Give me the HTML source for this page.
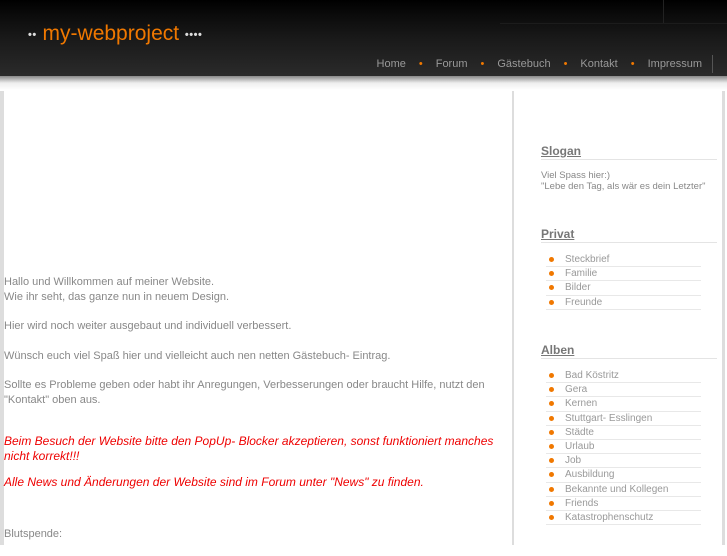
<!DOCTYPE html>
<html><head><meta charset="utf-8"><style>
*{margin:0;padding:0;box-sizing:border-box}
body{width:727px;height:545px;overflow:hidden;background:#fff;font-family:"Liberation Sans",Arial,sans-serif;position:relative}
#hd{position:absolute;left:0;top:0;width:727px;height:76px;background:linear-gradient(#000 0,#0b0b0b 15px,#1a1a1a 40px,#2a2a2a 75px)}
#hd .vl{position:absolute;left:663px;top:0;width:1px;height:24px;background:#222}
#hd .hl{position:absolute;left:500px;top:23px;width:227px;height:1px;background:#1c1c1c}
#logo{position:absolute;left:28px;top:22px;color:#f07800;font-size:21px}
#logo span{color:#ddd;font-size:11px;letter-spacing:0.5px;font-weight:bold;vertical-align:2px}
#nav{position:absolute;right:0;top:55px;font-size:11px;color:#999}
#nav b{color:#f07800;font-weight:normal;margin:0 13px;font-size:11px}
#nav .end{display:inline-block;width:1px;height:18px;background:#555;vertical-align:middle;margin:0 14px 0 10px}
#sh{position:absolute;left:0;top:76px;width:727px;height:14px;background:linear-gradient(#888,#eee 50%,#fff)}
#lb{position:absolute;left:0;top:91px;width:4px;height:454px;background:#ddd}
#sb1{position:absolute;left:512px;top:91px;width:2px;height:454px;background:#ddd}
#sb2{position:absolute;left:722px;top:91px;width:3px;height:454px;background:#ddd}
#main{position:absolute;left:4px;top:275px;width:490px;font-size:11px;line-height:14.5px;color:#888}
#main p{margin-bottom:15px}
#main .r{color:#e00;font-style:italic;font-size:12px}
h3{position:absolute;left:541px;font-size:12px;color:#777;text-decoration:underline;width:176px;border-bottom:1px solid #e4e4e4;padding-bottom:1px;line-height:14px}
.txt{position:absolute;left:541px;font-size:9.5px;color:#888;line-height:10.5px}
ul{position:absolute;left:546px;width:155px;list-style:none;font-size:10px;color:#999}
li{height:14.2px;line-height:13px;border-bottom:1px solid #e8e8e8;padding-left:19px;position:relative}
li:before{content:"";position:absolute;left:3px;top:4px;width:5px;height:5px;border-radius:50%;background:#f07800}
</style></head><body>
<div id="hd"><div class="vl"></div><div class="hl"></div>
<div id="logo"><span>••</span> my-webproject <span>••••</span></div>
<div id="nav"><span>Home</span><b>•</b><span>Forum</span><b>•</b><span>Gästebuch</span><b>•</b><span>Kontakt</span><b>•</b><span>Impressum</span><i class="end"></i></div>
</div>
<div id="sh"></div>
<div id="lb"></div><div id="sb1"></div><div id="sb2"></div>
<div id="main">
<p>Hallo und Willkommen auf meiner Website.<br>Wie ihr seht, das ganze nun in neuem Design.</p>
<p>Hier wird noch weiter ausgebaut und individuell verbessert.</p>
<p>Wünsch euch viel Spaß hier und vielleicht auch nen netten Gästebuch- Eintrag.</p>
<p style="margin-bottom:27px">Sollte es Probleme geben oder habt ihr Anregungen, Verbesserungen oder braucht Hilfe, nutzt den "Kontakt" oben aus.</p>
<p class="r" style="margin-bottom:12px">Beim Besuch der Website bitte den PopUp- Blocker akzeptieren, sonst funktioniert manches nicht korrekt!!!</p>
<p class="r" style="margin-bottom:37px">Alle News und Änderungen der Website sind im Forum unter "News" zu finden.</p>
<p>Blutspende:</p>
</div>
<h3 style="top:144px">Slogan</h3>
<div class="txt" style="top:171px">Viel Spass hier:)<br>"Lebe den Tag, als wär es dein Letzter"</div>
<h3 style="top:227px">Privat</h3>
<ul style="top:253px"><li>Steckbrief</li><li>Familie</li><li>Bilder</li><li>Freunde</li></ul>
<h3 style="top:343px">Alben</h3>
<ul style="top:369px"><li>Bad Köstritz</li><li>Gera</li><li>Kernen</li><li>Stuttgart- Esslingen</li><li>Städte</li><li>Urlaub</li><li>Job</li><li>Ausbildung</li><li>Bekannte und Kollegen</li><li>Friends</li><li>Katastrophenschutz</li></ul>
</body></html>
